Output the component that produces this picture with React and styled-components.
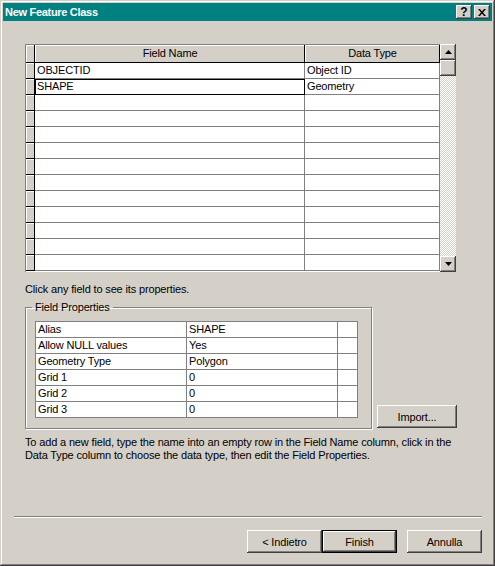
import React from 'react'
import styled, { createGlobalStyle } from 'styled-components'

const GlobalStyle = createGlobalStyle`
  html, body { margin:0; padding:0; background:#d4d0c8; }
  body {
    font-family: "Liberation Sans", Arial, sans-serif;
    font-size:11px;
    letter-spacing:-0.15px;
    color:#000;
  }
  * { box-sizing:border-box; }
`

const raised = `
  background:#d4d0c8;
  box-shadow: inset -1px -1px #404040, inset 1px 1px #fff,
    inset -2px -2px #808080, inset 2px 2px #d4d0c8;
`

const Window = styled.div`
  width:495px;
  height:566px;
  padding:3px;
  display:flex;
  flex-direction:column;
  background:#d4d0c8;
  box-shadow: inset -1px -1px #404040, inset 1px 1px #d4d0c8,
    inset -2px -2px #808080, inset 2px 2px #fff;
`

const TitleBar = styled.div`
  height:18px;
  background:#008080;
  display:flex;
  align-items:center;
  padding:0 2px;
  color:#fff;
  font-weight:bold;
  letter-spacing:-0.3px;
`

const TitleText = styled.span`
  flex:1;
  line-height:18px;
`

const CapButton = styled.button`
  ${raised}
  width:16px;
  height:14px;
  margin-left:2px;
  padding:0;
  border:0;
  display:flex;
  align-items:center;
  justify-content:center;
  font:bold 12px "Liberation Sans", Arial, sans-serif;
  color:#000;
`

const Main = styled.div`
  flex:1;
  padding:23px 0 0 22px;
`

const GridArea = styled.div`
  display:flex;
  height:228px;
  width:431px;
`

const Grid = styled.div`
  width:415px;
  display:grid;
  grid-template-columns:9px 270px 135px;
  grid-template-rows:18px repeat(13, 16px);
  border-top:1px solid #808080;
  border-left:1px solid #808080;
  background:#fff;
`

const HeadCell = styled.div`
  background:#d4d0c8;
  box-shadow: inset -1px -1px #000, inset 1px 1px #fff;
  text-align:center;
  line-height:17px;
  white-space:nowrap;
`

const Selector = styled.div`
  background:#d4d0c8;
  box-shadow: inset -1px -1px #000, inset 1px 1px #fff;
`

const Cell = styled.div`
  background:#fff;
  border-right:1px solid ${p => (p.$focus ? '#000' : '#808080')};
  border-bottom:1px solid ${p => (p.$focus ? '#000' : '#808080')};
  box-shadow:${p => (p.$focus ? 'inset 1px 1px #000' : 'none')};
  padding-left:2px;
  line-height:15px;
  white-space:nowrap;
  overflow:hidden;
`

const ScrollBar = styled.div`
  width:16px;
  display:flex;
  flex-direction:column;
`

const ScrollButton = styled.div`
  ${raised}
  height:16px;
  display:flex;
  align-items:center;
  justify-content:center;
`

const Track = styled.div`
  flex:1;
  background:repeating-conic-gradient(#d4d0c8 0 25%, #fff 0 50%) 0 0 / 2px 2px;
`

const Hint = styled.div`
  margin-top:11px;
  line-height:13px;
`

const PropsRow = styled.div`
  display:flex;
  align-items:flex-end;
  margin-top:5px;
`

const GroupBox = styled.fieldset`
  width:347px;
  margin:0;
  padding:7px 12px 10px 9px;
  border:1px solid #808080;
  box-shadow: inset 1px 1px #fff, 1px 1px #fff;
`

const GroupLabel = styled.legend`
  padding:0 3px;
  margin-left:-3px;
  line-height:13px;
`

const PropsTable = styled.div`
  width:323px;
  display:grid;
  grid-template-columns:151px 151px 20px;
  grid-auto-rows:16px;
  border-top:1px solid #808080;
  border-left:1px solid #808080;
  background:#fff;
`

const PushButton = styled.button`
  ${raised}
  width:${p => p.$w || 75}px;
  height:23px;
  padding:0;
  margin:0;
  border:${p => (p.$default ? '1px solid #000' : '0')};
  font:11px "Liberation Sans", Arial, sans-serif;
  letter-spacing:-0.15px;
  color:#000;
`

const ImportButton = styled(PushButton)`
  margin:0 0 1px 5px;
`

const Instructions = styled.div`
  margin-top:7px;
  line-height:13px;
  white-space:nowrap;
`

const Footer = styled.div`
  padding:0 10px 10px 11px;
`

const Separator = styled.div`
  height:2px;
  border-top:1px solid #808080;
  border-bottom:1px solid #fff;
  margin-bottom:12px;
`

const ButtonRow = styled.div`
  display:flex;
  justify-content:flex-end;
`

const CancelButton = styled(PushButton)`
  margin-left:10px;
`

const Arrow = ({ down }) => (
  <svg width="7" height="4" viewBox="0 0 7 4">
    <path d={down ? 'M0 0h7L3.5 4z' : 'M3.5 0L7 4H0z'} fill="#000" />
  </svg>
)

const CloseGlyph = () => (
  <svg width="8" height="7" viewBox="0 0 8 7">
    <path d="M0 0h2l2 2.4L6 0h2L5 3.5 8 7H6L4 4.6 2 7H0l3-3.5z" fill="#000" />
  </svg>
)

const fields = [
  ['OBJECTID', 'Object ID'],
  ['SHAPE', 'Geometry'],
]

const props = [
  ['Alias', 'SHAPE'],
  ['Allow NULL values', 'Yes'],
  ['Geometry Type', 'Polygon'],
  ['Grid 1', '0'],
  ['Grid 2', '0'],
  ['Grid 3', '0'],
]

export default function App() {
  const rows = Array.from({ length: 13 }, (_, i) => fields[i] || ['', ''])
  return (
    <>
      <GlobalStyle />
      <Window>
        <TitleBar>
          <TitleText>New Feature Class</TitleText>
          <CapButton>?</CapButton>
          <CapButton><CloseGlyph /></CapButton>
        </TitleBar>

        <Main>
          <GridArea>
            <Grid>
              <Selector />
              <HeadCell>Field Name</HeadCell>
              <HeadCell>Data Type</HeadCell>
              {rows.map((r, i) => (
                <React.Fragment key={i}>
                  <Selector />
                  <Cell $focus={i === 1}>{r[0]}</Cell>
                  <Cell>{r[1]}</Cell>
                </React.Fragment>
              ))}
            </Grid>
            <ScrollBar>
              <ScrollButton><Arrow /></ScrollButton>
              <ScrollButton />
              <Track />
              <ScrollButton><Arrow down /></ScrollButton>
            </ScrollBar>
          </GridArea>

          <Hint>Click any field to see its properties.</Hint>

          <PropsRow>
            <GroupBox>
              <GroupLabel>Field Properties</GroupLabel>
              <PropsTable>
                {props.map((p, i) => (
                  <React.Fragment key={i}>
                    <Cell>{p[0]}</Cell>
                    <Cell>{p[1]}</Cell>
                    <Cell />
                  </React.Fragment>
                ))}
              </PropsTable>
            </GroupBox>
            <ImportButton $w={80}>Import...</ImportButton>
          </PropsRow>

          <Instructions>
            To add a new field, type the name into an empty row in the Field Name column, click in the
            <br />
            Data Type column to choose the data type, then edit the Field Properties.
          </Instructions>
        </Main>

        <Footer>
          <Separator />
          <ButtonRow>
            <PushButton>&lt; Indietro</PushButton>
            <PushButton $default>Finish</PushButton>
            <CancelButton>Annulla</CancelButton>
          </ButtonRow>
        </Footer>
      </Window>
    </>
  )
}
